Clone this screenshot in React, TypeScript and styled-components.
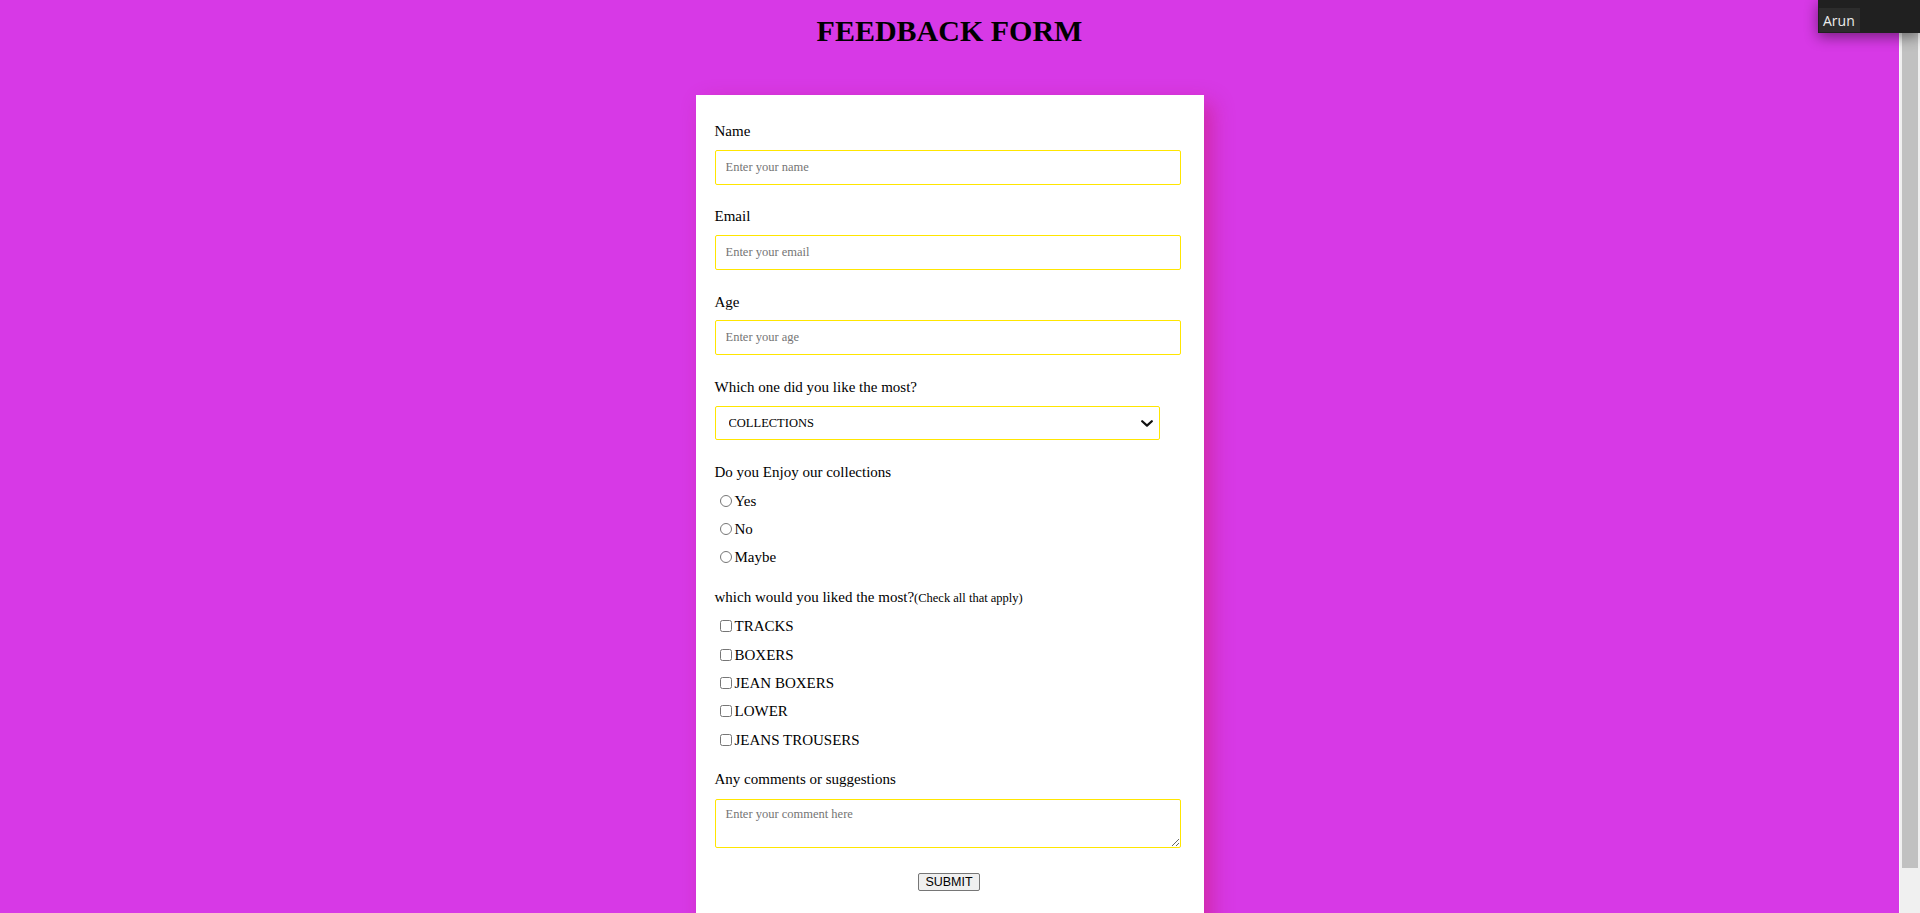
import React from 'react';
import styled, { createGlobalStyle } from 'styled-components';

const GlobalStyle = createGlobalStyle`
  body {
    margin: 0;
    background: #d739e6;
    font-family: "Liberation Serif", "Times New Roman", serif;
    color: #000;
  }
`;

const Shell = styled.div`
  display: flex;
  height: 100vh;
  overflow: hidden;
`;

const Main = styled.main`
  flex: 1;
  min-width: 0;
  overflow: hidden;
  padding-bottom: 24px;
`;

const ScrollTrack = styled.div`
  flex: none;
  width: 21px;
  box-sizing: border-box;
  padding: 0 2px 0 2px;
  background: #f0f0f0;
  border-left: 1px solid #f8f8f8;
`;

const ScrollThumb = styled.div`
  height: 868px;
  background: #c1c1c1;
`;

const Title = styled.h1`
  margin: 14px 0 47px;
  text-align: center;
  font-size: 30px;
  line-height: 34px;
  font-weight: bold;
`;

const Card = styled.form`
  width: 508px;
  margin: 0 auto;
  box-sizing: border-box;
  background: #fff;
  padding: 27px 23px 45px 19px;
  box-shadow: 8px 8px 20px rgba(200, 20, 90, 0.45);
`;

const Field = styled.div<{ $after?: number }>`
  margin-bottom: ${(p) => p.$after ?? 22.7}px;
`;

const Label = styled.label`
  display: block;
  font-size: 15px;
  line-height: 18px;
`;

const Small = styled.span`
  font-size: 12.5px;
`;

const TextInput = styled.input`
  display: block;
  width: 466px;
  height: 35px;
  margin: 9.7px 0 0;
  box-sizing: border-box;
  border: 1px solid #ffe600;
  border-radius: 2px;
  padding: 0 10px;
  font-family: "Liberation Serif", serif;
  font-size: 12.5px;
  outline: none;
  &::placeholder { color: #757575; }
`;

const SelectWrap = styled.div`
  position: relative;
  width: 445px;
  margin-top: 9.7px;
`;

const Select = styled.select`
  display: block;
  width: 100%;
  height: 34px;
  box-sizing: border-box;
  appearance: none;
  -webkit-appearance: none;
  border: 1px solid #ffe600;
  border-radius: 2px;
  padding: 0 30px 0 13px;
  background: #fff;
  color: #000;
  font-family: "Liberation Serif", serif;
  font-size: 12.5px;
  outline: none;
`;

const Chevron = styled.svg`
  position: absolute;
  right: 7px;
  top: 14px;
  width: 12px;
  height: 7px;
  pointer-events: none;
`;

const OptionList = styled.div<{ $gap: number; $first: number }>`
  padding-top: ${(p) => p.$first}px;
  display: flex;
  flex-direction: column;
  gap: ${(p) => p.$gap}px;
`;

const OptionRow = styled.label`
  display: flex;
  align-items: center;
  height: 18px;
  font-size: 15px;
  line-height: 18px;
`;

const Choice = styled.input`
  width: 12px;
  height: 12px;
  margin: 0 3px 0 5px;
  flex: none;
`;

const TextArea = styled.textarea`
  display: block;
  width: 466px;
  height: 49px;
  margin: 11px 0 0;
  box-sizing: border-box;
  border: 1px solid #ffe600;
  border-radius: 2px;
  padding: 7px 10px;
  font-family: "Liberation Serif", serif;
  font-size: 12.5px;
  outline: none;
  &::placeholder { color: #757575; }
`;

const ButtonRow = styled.div`
  display: flex;
  justify-content: center;
  margin-top: 25px;
  padding-left: 3px;
`;

const SubmitButton = styled.button`
  height: 18px;
  padding: 0 6px;
  border: 1px solid #767676;
  border-radius: 2px;
  background: #efefef;
  color: #000;
  font-family: "Liberation Sans", Arial, sans-serif;
  font-size: 12.5px;
  line-height: 16px;
`;

const NameTag = styled.div`
  position: fixed;
  top: 0;
  right: 0;
  width: 102px;
  height: 33px;
  background: #202020;
  box-shadow: 0 4px 14px rgba(0, 0, 0, 0.45);
  box-sizing: border-box;
  padding: 8px 0 0 1px;
`;

const NameChip = styled.span`
  display: inline-block;
  height: 24px;
  padding: 0 5px 0 4px;
  background: #2c2c2c;
  color: #ececec;
  font-family: "Open Sans", "Noto Sans", sans-serif;
  font-size: 14px;
  line-height: 26px;
`;

const radios = ['Yes', 'No', 'Maybe'];
const items = ['TRACKS', 'BOXERS', 'JEAN BOXERS', 'LOWER', 'JEANS TROUSERS'];

export default function App() {
  return (
    <Shell>
      <GlobalStyle />
      <Main>
        <Title>FEEDBACK FORM</Title>
        <Card onSubmit={(e) => e.preventDefault()}>
          <Field>
            <Label htmlFor="name">Name</Label>
            <TextInput id="name" type="text" placeholder="Enter your name" />
          </Field>
          <Field>
            <Label htmlFor="email">Email</Label>
            <TextInput id="email" type="email" placeholder="Enter your email" />
          </Field>
          <Field>
            <Label htmlFor="age">Age</Label>
            <TextInput id="age" type="text" placeholder="Enter your age" />
          </Field>
          <Field>
            <Label htmlFor="like">Which one did you like the most?</Label>
            <SelectWrap>
              <Select id="like" defaultValue="collections">
                <option value="collections">COLLECTIONS</option>
                <option value="tracks">TRACKS</option>
                <option value="boxers">BOXERS</option>
              </Select>
              <Chevron viewBox="0 0 12 7" aria-hidden="true">
                <path d="M1.2 1.2 L6 5.6 L10.8 1.2" fill="none" stroke="#111" strokeWidth="2.2" strokeLinecap="round" strokeLinejoin="round" />
              </Chevron>
            </SelectWrap>
          </Field>
          <Field>
            <Label as="div">Do you Enjoy our collections</Label>
            <OptionList $gap={10} $first={11}>
              {radios.map((r) => (
                <OptionRow key={r}>
                  <Choice type="radio" name="enjoy" value={r} />
                  {r}
                </OptionRow>
              ))}
            </OptionList>
          </Field>
          <Field $after={21}>
            <Label as="div">
              which would you liked the most?<Small>(Check all that apply)</Small>
            </Label>
            <OptionList $gap={10.4} $first={10}>
              {items.map((it) => (
                <OptionRow key={it}>
                  <Choice type="checkbox" value={it} />
                  {it}
                </OptionRow>
              ))}
            </OptionList>
          </Field>
          <Label htmlFor="comment">Any comments or suggestions</Label>
          <TextArea id="comment" placeholder="Enter your comment here" />
          <ButtonRow>
            <SubmitButton type="submit">SUBMIT</SubmitButton>
          </ButtonRow>
        </Card>
      </Main>
      <ScrollTrack>
        <ScrollThumb />
      </ScrollTrack>
      <NameTag>
        <NameChip>Arun</NameChip>
      </NameTag>
    </Shell>
  );
}
